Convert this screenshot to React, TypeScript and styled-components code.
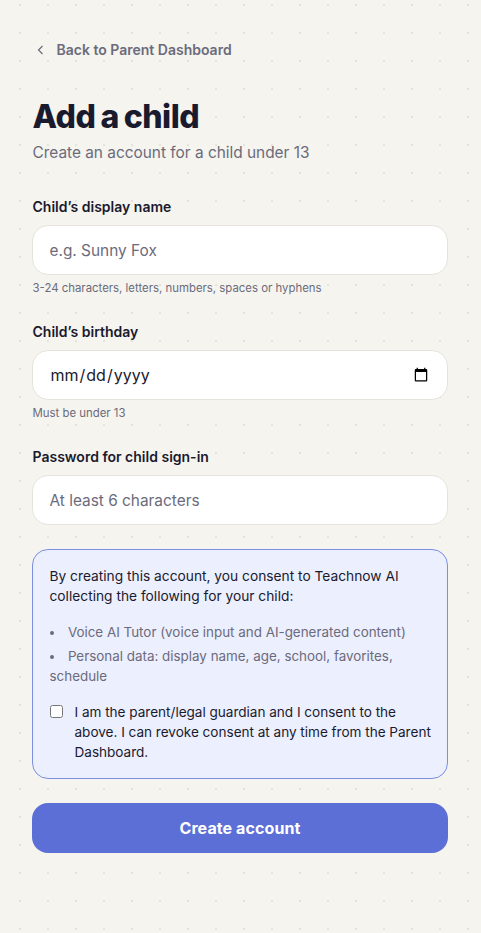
import styled, { createGlobalStyle } from 'styled-components';

const GlobalStyle = createGlobalStyle`
  * {
    box-sizing: border-box;
  }

  html,
  body {
    margin: 0;
    padding: 0;
  }

  body {
    background-color: #f5f4ef;
    font-family: 'Inter', 'Liberation Sans', sans-serif;
  }
`;

const Page = styled.main`
  min-height: 933px;
  padding: 40px 32px 80px;
  background-color: #f5f4ef;
  background-image: radial-gradient(circle at 1px 1px, #e4e3dd 1px, transparent 1.2px);
  background-size: 28px 28px;
  background-position: 19px 32px;
`;

const Column = styled.div`
  max-width: 416px;
`;

const BackLink = styled.a`
  display: flex;
  align-items: center;
  gap: 10px;
  height: 20px;
  padding-left: 2.5px;
  color: #6b6b7b;
  font-size: 14px;
  font-weight: 600;
  line-height: 20px;
  text-decoration: none;
`;

const Title = styled.h1`
  margin: 35px 0 0;
  padding-left: 0.5px;
  color: #1a1a2e;
  font-size: 32px;
  font-weight: 800;
  line-height: 44px;
  letter-spacing: -0.5px;
  word-spacing: -1.5px;
`;

const Subtitle = styled.p`
  margin: 2px 0 0;
  padding-left: 0.5px;
  color: #6b6b7b;
  font-size: 15.4px;
  line-height: 24px;
`;

const Form = styled.form`
  display: flex;
  flex-direction: column;
  margin-top: 32px;
`;

const Field = styled.div`
  display: flex;
  flex-direction: column;
  margin-bottom: 24px;
`;

const Label = styled.label`
  margin-bottom: 8px;
  padding-left: 0.5px;
  color: #1a1a2e;
  font-size: 14px;
  font-weight: 600;
  line-height: 20px;
`;

const Input = styled.input`
  width: 100%;
  height: 50px;
  padding: 0 16px 0 16.5px;
  border: 1px solid #e5e3dc;
  border-radius: 16px;
  background: #ffffff;
  color: #1a1a2e;
  font-family: inherit;
  font-size: 15.4px;
  outline: none;

  &::placeholder {
    color: #6b6b7b;
    opacity: 1;
  }
`;

const DateInput = styled(Input)`
  font-size: 16px;
`;

const Hint = styled.span`
  margin: 5px 0 2px;
  padding-left: 0.5px;
  color: #6b6b7b;
  font-size: 11.4px;
  line-height: 16px;
`;

const ConsentBox = styled.section`
  padding: 16px 15px 16px 16.5px;
  border: 1px solid #7b8ee0;
  border-radius: 16px;
  background: #eceffe;
  color: #1a1a2e;
  font-size: 13.6px;
  line-height: 20px;
`;

const ConsentIntro = styled.p`
  margin: 0 0 16px;
  font-size: 13.75px;
`;

const ConsentList = styled.ul`
  margin: 0 0 16px;
  padding: 0;
  color: #6b6b7b;
  font-size: 13.4px;
  list-style-position: inside;
`;

const ConsentItem = styled.li`
  margin-bottom: 4px;

  &:last-child {
    margin-bottom: 0;
  }
`;

const ConsentRow = styled.label`
  display: flex;
  align-items: flex-start;
  gap: 12px;
  letter-spacing: -0.03px;
`;

const Checkbox = styled.input`
  flex: none;
  width: 13px;
  height: 13px;
  margin: 3px 0 0;
`;

const SubmitButton = styled.button`
  height: 50px;
  margin-top: 24px;
  border: none;
  border-radius: 16px;
  background: #5b6fd6;
  color: #ffffff;
  font-family: inherit;
  font-size: 16px;
  font-weight: 700;
  letter-spacing: 0.1px;
`;

export default function App() {
  return (
    <Page>
      <GlobalStyle />
      <Column>
        <BackLink href="#">
          <svg width="12" height="12" viewBox="0 0 12 12" fill="none" stroke="#6b6b7b" strokeWidth="1.2">
            <path d="M7.5 2 L3.5 6 L7.5 10" />
          </svg>
          Back to Parent Dashboard
        </BackLink>
        <Title>Add a child</Title>
        <Subtitle>Create an account for a child under 13</Subtitle>
        <Form>
          <Field>
            <Label htmlFor="name">Child’s display name</Label>
            <Input id="name" type="text" placeholder="e.g. Sunny Fox" />
            <Hint>3-24 characters, letters, numbers, spaces or hyphens</Hint>
          </Field>
          <Field>
            <Label htmlFor="birthday">Child’s birthday</Label>
            <DateInput id="birthday" type="date" />
            <Hint>Must be under 13</Hint>
          </Field>
          <Field>
            <Label htmlFor="password">Password for child sign-in</Label>
            <Input id="password" type="password" placeholder="At least 6 characters" />
          </Field>
          <ConsentBox>
            <ConsentIntro>
              By creating this account, you consent to Teachnow AI collecting the following for your child:
            </ConsentIntro>
            <ConsentList>
              <ConsentItem>Voice AI Tutor (voice input and AI-generated content)</ConsentItem>
              <ConsentItem>Personal data: display name, age, school, favorites, schedule</ConsentItem>
            </ConsentList>
            <ConsentRow>
              <Checkbox type="checkbox" />
              <span>
                I am the parent/legal guardian and I consent to the above. I can revoke consent at any time from the
                Parent Dashboard.
              </span>
            </ConsentRow>
          </ConsentBox>
          <SubmitButton type="button">Create account</SubmitButton>
        </Form>
      </Column>
    </Page>
  );
}
